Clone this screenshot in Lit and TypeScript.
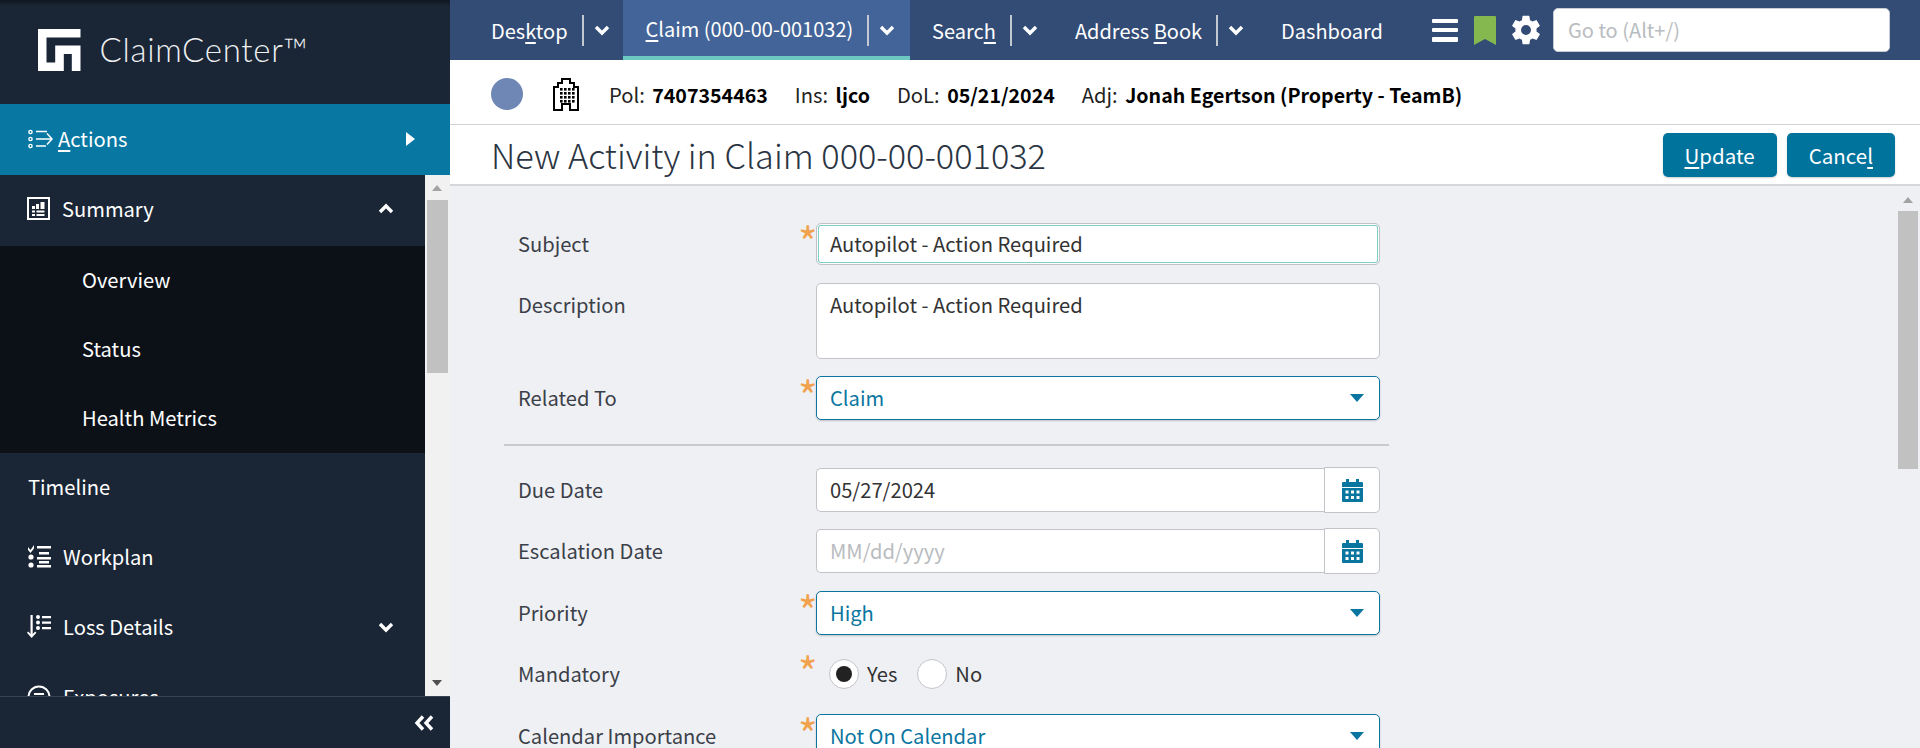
import { LitElement, html, css, svg } from "lit";
import { customElement } from "lit/decorators.js";

const chevronDown = html`<svg class="chev" width="16" height="12" viewBox="0 0 16 12"><path d="M2 3l6 6 6-6" fill="none" stroke="#fff" stroke-width="3.4"/></svg>`;
const chevronUp = html`<svg class="chev" width="16" height="12" viewBox="0 0 16 12"><path d="M2 9l6-6 6 6" fill="none" stroke="#fff" stroke-width="3.4"/></svg>`;

const actionsIcon = html`<svg class="ico" width="25" height="20" viewBox="0 0 25 20" fill="none" stroke="#fff">
  <circle cx="2.5" cy="3" r="1.6" stroke-width="1.4"/><circle cx="2.5" cy="10" r="1.6" stroke-width="1.4"/><circle cx="2.5" cy="17" r="1.6" stroke-width="1.4"/>
  <path d="M8 2.5h11M8 10h16M8 17h10" stroke-width="1.5"/><path d="M19 4.5l5 5.5-5 5.5" stroke-width="1.5"/></svg>`;
const summaryIcon = html`<svg class="ico" width="23" height="23" viewBox="0 0 23 23" fill="none">
  <rect x="1" y="1" width="21" height="21" stroke="#fff" stroke-width="2"/>
  <path fill="#fff" d="M5 9h3v3H5zM9 7h3v5H9zM13.500 5h4v7h-4zM5 13.500h3v2H5zM9.500 13.500h8v2h-8zM5 17h3v2H5zM9.500 17h8v2h-8z"/></svg>`;
const workplanIcon = html`<svg class="ico" width="24" height="23" viewBox="0 0 24 23" fill="#fff">
  <path d="M1 2l2.500 3L7 0v3.500L3.500 8 1 5z"/><circle cx="4" cy="12" r="2.600"/><circle cx="4" cy="20" r="2.600"/>
  <path d="M10 1h14v2.400H10zM12 7h10v2.400H12zM10 12h14v2.400H10zM12 16h10v2.400H12zM10 20h14v2.400H10z"/></svg>`;
const lossIcon = html`<svg class="ico" width="24" height="24" viewBox="0 0 24 24" fill="#fff">
  <path d="M3.500 0h2.200v19l2.500-2.500 1.200 1.300-4.800 5.200L0 17.800l1.200-1.300 2.300 2.500z"/>
  <circle cx="11" cy="2" r="2"/><circle cx="11" cy="7.500" r="2"/><circle cx="11" cy="13" r="2"/>
  <path d="M15 1h9v2.200h-9zM15 6.500h9v2.200h-9zM15 12h9v2.200h-9z"/></svg>`;
const exposureIcon = html`<svg class="ico" width="24" height="24" viewBox="0 0 24 24" fill="none" stroke="#fff" stroke-width="2">
  <circle cx="12" cy="12" r="10.500"/><path d="M7 9h10M7 13h10"/></svg>`;
const buildingIcon = html`<svg width="26" height="33" viewBox="0 0 26 33" fill="none">
  <path d="M1 32V9h4V5h4V1h8v4h4v4h4v23h-8v-6H9v6z" stroke="#000" stroke-width="2"/>
  ${[10, 14, 18, 22].map((y) => [7, 11, 15, 19].map((x) => svg`<rect x=${x} y=${y} width="2.600" height="2.600" fill="#000"/>`))}
</svg>`;
const gearIcon = html`<svg width="34" height="34" viewBox="0 0 24 24"><path fill="#fff" fill-rule="evenodd" d="M19.400 13c.04-.33.06-.66.06-1s-.02-.67-.06-1l2.100-1.650c.2-.15.25-.42.12-.64l-2-3.460c-.12-.22-.39-.3-.61-.22l-2.490 1c-.52-.4-1.080-.73-1.690-.98l-.38-2.650A.49.49 0 0 0 14 2h-4c-.25 0-.46.18-.49.420l-.38 2.650c-.61.25-1.170.59-1.690.98l-2.490-1c-.23-.09-.49 0-.61.220l-2 3.460c-.13.220-.07.490.12.640L4.570 11c-.04.33-.07.67-.07 1s.03.67.07 1l-2.110 1.650c-.19.150-.24.420-.12.640l2 3.460c.12.220.39.300.61.220l2.490-1c.52.400 1.080.730 1.690.980l.38 2.650c.03.240.24.420.49.420h4c.25 0 .46-.18.49-.42l.38-2.650c.61-.25 1.170-.59 1.690-.98l2.490 1c.23.090.49 0 .61-.22l2-3.460c.12-.22.070-.49-.12-.64zM12 15.500a3.500 3.500 0 1 1 0-7 3.500 3.500 0 0 1 0 7z"/></svg>`;
const calendarIcon = html`<svg width="21" height="23" viewBox="0 0 21 23"><path fill="#0a76a0" fill-rule="evenodd" d="M4 0h3v3h7V0h3v3h3a1 1 0 0 1 1 1v4H0V4a1 1 0 0 1 1-1h3zM0 9h21v13a1 1 0 0 1-1 1H1a1 1 0 0 1-1-1zm3.500 2.500v3h3v-3zm5.500 0v3h3v-3zm5.500 0v3h3v-3zm-11 5.500v3h3v-3zm5.500 0v3h3v-3zm5.500 0v3h3v-3z"/></svg>`;
const caret = html`<svg class="caret" width="14" height="8" viewBox="0 0 14 8"><path d="M0 0h14L7 8z" fill="#0a76a0"/></svg>`;

@customElement("app-root")
export class AppRoot extends LitElement {
  static styles = css`
    :host {
      display: block;
      height: 748px;
      overflow: hidden;
      font-family: "Noto Sans CJK SC", "Noto Sans", sans-serif;
      font-size: 20.150px;
      color: #333;
    }
    .page {
      display: flex;
      height: 748px;
    }
    u {
      text-underline-offset: 3px;
      text-decoration-thickness: 2px;
    }

    /* left nav */
    .side {
      width: 450px;
      flex: none;
      display: flex;
      flex-direction: column;
      background: #1a2535;
      color: #fff;
    }
    .brand {
      height: 104px;
      flex: none;
      display: flex;
      align-items: flex-start;
      gap: 19px;
      padding: 29px 0 0 38px;
      box-sizing: border-box;
      background: linear-gradient(#10161f, #1a2535 6px);
    }
    .brand-name {
      font-family: "Lato", sans-serif;
      font-weight: 300;
      font-size: 33px;
      line-height: 40px;
      letter-spacing: 0.7px;
      color: #eef0f2;
    }
    .actions {
      height: 71px;
      flex: none;
      box-sizing: border-box;
      display: flex;
      align-items: center;
      background: #0878a3;
      padding: 0 35px 2px 28px;
      gap: 5px;
    }
    .actions .lbl {
      flex: 1;
    }
    .nav-scroll {
      flex: 1;
      min-height: 0;
      display: flex;
    }
    .nav-list {
      flex: 1;
      min-width: 0;
      overflow: hidden;
    }
    .row {
      height: 70px;
      box-sizing: border-box;
      display: flex;
      align-items: center;
      padding: 0 31px 3px 27px;
      gap: 12px;
    }
    .row.summary {
      height: 71px;
      padding-bottom: 4px;
    }
    .row .lbl {
      flex: 1;
    }
    .row.plain {
      padding-left: 28px;
    }
    .sub {
      background: #0c1118;
    }
    .sub div {
      height: 69px;
      line-height: 67px;
      padding-left: 82px;
    }
    .ico {
      flex: none;
    }
    .track {
      width: 25px;
      flex: none;
      background: #f1f1f1;
      position: relative;
    }
    .track .thumb {
      position: absolute;
      left: 2px;
      right: 2px;
      top: 25px;
      height: 173px;
      background: #c1c1c1;
    }
    .arrow {
      position: absolute;
      left: 7px;
      width: 0;
      height: 0;
      border-left: 5.500px solid transparent;
      border-right: 5.500px solid transparent;
    }
    .arrow.up {
      top: 10px;
      border-bottom: 6px solid #a3a3a3;
    }
    .arrow.down {
      bottom: 10px;
      border-top: 6px solid #505050;
    }
    .collapse {
      height: 52px;
      flex: none;
      box-sizing: border-box;
      border-top: 1px solid #39434f;
      display: flex;
      align-items: center;
      justify-content: flex-end;
      padding-right: 16px;
    }

    /* main column */
    .main {
      flex: 1;
      min-width: 0;
      display: flex;
      flex-direction: column;
    }
    .top {
      height: 60px;
      flex: none;
      display: flex;
      background: #324c76;
      color: #fff;
      font-size: 20px;
    }
    .tab {
      display: flex;
      flex: none;
      align-items: center;
      height: 60px;
      box-sizing: border-box;
      white-space: nowrap;
      padding: 0 14.500px 0 22.500px;
    }
    .tab.first {
      padding: 0 13px 0 41px;
    }
    .tab.active {
      background: #426498;
      border-bottom: 4px solid #6bc9c2;
      width: 287px;
      padding: 0 0 0 23px;
    }
    .tab .sep {
      width: 2px;
      height: 31px;
      background: #c4c8d0;
      margin: 0 10px 0 14px;
    }
    .tab.active .sep {
      margin-top: 4px;
    }
    .tab.active .chev {
      margin-top: 4px;
    }
    .top-tools {
      margin-left: auto;
      display: flex;
      align-items: center;
      padding-right: 30px;
    }
    .burger {
      width: 26px;
      height: 23px;
      display: flex;
      flex-direction: column;
      justify-content: space-between;
      margin-right: 16px;
    }
    .burger i {
      height: 4.500px;
      background: #fff;
      border-radius: 1px;
    }
    .bookmark {
      margin-right: 13px;
      display: block;
    }
    .gear {
      display: flex;
      margin-right: 10px;
    }
    .goto {
      width: 337px;
      height: 44px;
      box-sizing: border-box;
      background: #fff;
      border: 1px solid #c8ccd2;
      border-radius: 5px;
      padding-left: 14px;
      line-height: 42px;
      color: #b9bcc0;
    }

    .info {
      height: 65px;
      flex: none;
      box-sizing: border-box;
      display: flex;
      align-items: center;
      background: #fff;
      border-bottom: 1px solid #d0d2d6;
      color: #222;
      padding: 4px 0 0 41px;
    }
    .dot {
      width: 32px;
      height: 32px;
      border-radius: 50%;
      background: #6e87b5;
      margin-right: 30px;
    }
    .info svg {
      margin-right: 30px;
    }
    .info span {
      margin-right: 27px;
    }
    .info b {
      font-weight: 700;
      font-size: 19.600px;
      color: #000;
      margin-left: 3px;
    }

    .title-bar {
      height: 61px;
      flex: none;
      box-sizing: border-box;
      display: flex;
      align-items: center;
      justify-content: space-between;
      background: #fff;
      border-bottom: 2px solid #d5d6da;
      padding: 0 25px 0 41px;
    }
    h1 {
      margin: 0 0 2px;
      font-size: 34.300px;
      font-weight: 300;
      color: #2a3442;
    }
    .btns {
      display: flex;
      gap: 10px;
    }
    .btn {
      height: 44px;
      line-height: 44px;
      padding: 0 22px;
      border-radius: 5px;
      background: #00739d;
      color: #fff;
      font-size: 20.500px;
      box-shadow: 0 1px 2px rgba(0, 0, 0, 0.2);
    }

    /* form */
    .content {
      flex: 1;
      min-height: 0;
      display: flex;
      background: #eff0f4;
      overflow: hidden;
    }
    .form {
      flex: 1;
      min-width: 0;
      padding: 36px 0 0 55px;
    }
    .vbar {
      width: 22px;
      flex: none;
      position: relative;
    }
    .vbar .thumb {
      position: absolute;
      left: 0;
      right: 2px;
      top: 25px;
      height: 258px;
      background: #c1c1c1;
    }
    .vbar .arrow.up {
      left: 5px;
      top: 11px;
    }
    .group {
      display: grid;
      gap: 17px;
    }
    .group.dates {
      gap: 17.400px;
    }
    .field {
      display: grid;
      grid-template-columns: 282px 16px 564px;
      width: 862px;
      padding-left: 13px;
      min-height: 44px;
      line-height: 44px;
    }
    .label {
      color: #3b4048;
      line-height: 43px;
    }
    .req {
      color: #f0a24e;
      font-size: 42px;
      line-height: 42px;
      height: 30px;
      margin: -2px 0 0 -2px;
    }
    .box {
      box-sizing: border-box;
      height: 44px;
      background: #fff;
      border: 1px solid #c2c4c9;
      border-radius: 5px;
      padding: 0 13px;
      line-height: 42px;
      color: #333;
    }
    .box.focus {
      height: 42px;
      margin-top: 1px;
      border-color: #bfc2c7;
      box-shadow: inset 0 0 0 1px #fff, inset 0 0 0 2px #7dcdc8;
      line-height: 40px;
    }
    .box.area {
      height: 76px;
      line-height: 42px;
    }
    .box.select {
      display: flex;
      align-items: center;
      justify-content: space-between;
      border-color: #0a76a0;
      color: #0a76a0;
      box-shadow: 0 1px 2px rgba(0, 0, 0, 0.2);
      padding-right: 15px;
    }
    .date {
      display: flex;
      height: 44px;
    }
    .date .box {
      flex: 1;
      border-radius: 5px 0 0 5px;
      border-right: none;
    }
    .date .pick {
      width: 56px;
      height: 46px;
      margin-top: -1px;
      box-sizing: border-box;
      background: #fff;
      border: 1px solid #c2c4c9;
      border-radius: 0 5px 5px 0;
      display: flex;
      align-items: center;
      justify-content: center;
    }
    .placeholder {
      color: #b9bcc0;
    }
    .rule {
      height: 2px;
      width: 885px;
      margin: 24px 0 22px -1px;
      background: #c9cacd;
    }
    .radios {
      display: flex;
      align-items: center;
      padding-left: 13px;
      height: 44px;
    }
    .radio {
      width: 30px;
      height: 30px;
      box-sizing: border-box;
      border: 1px solid #c2c4c9;
      border-radius: 50%;
      background: #fff;
      display: flex;
      align-items: center;
      justify-content: center;
      margin-right: 8px;
    }
    .radio i {
      width: 16px;
      height: 16px;
      border-radius: 50%;
      background: #222;
    }
    .radios span {
      margin-right: 20px;
    }
  `;

  private selectField(label: string, value: string) {
    return html`<div class="field">
      <div class="label">${label}</div>
      <div class="req">*</div>
      <div class="box select">${value}${caret}</div>
    </div>`;
  }

  private dateField(label: string, value: string, empty = false) {
    return html`<div class="field">
      <div class="label">${label}</div>
      <div></div>
      <div class="date">
        <div class="box ${empty ? "placeholder" : ""}">${value}</div>
        <div class="pick">${calendarIcon}</div>
      </div>
    </div>`;
  }

  render() {
    return html`<div class="page">
      <aside class="side">
        <div class="brand">
          <svg width="42.500" height="42" viewBox="37.500 29 42.500 42"><path fill="#fff" d="M37.500 29H80v8.500H46v25h8.700V45.500H80V71h-8.700V54h-8v17H37.500z"/></svg>
          <div class="brand-name">ClaimCenter™</div>
        </div>
        <div class="actions">
          ${actionsIcon}
          <span class="lbl"><u>A</u>ctions</span>
          <svg width="9" height="14" viewBox="0 0 9 14"><path d="M0 0l9 7-9 7z" fill="#fff"/></svg>
        </div>
        <div class="nav-scroll">
          <div class="nav-list">
            <div class="row summary">${summaryIcon}<span class="lbl">Summary</span>${chevronUp}</div>
            <div class="sub">
              <div>Overview</div>
              <div>Status</div>
              <div>Health Metrics</div>
            </div>
            <div class="row plain"><span class="lbl">Timeline</span></div>
            <div class="row">${workplanIcon}<span class="lbl">Workplan</span></div>
            <div class="row">${lossIcon}<span class="lbl">Loss Details</span>${chevronDown}</div>
            <div class="row">${exposureIcon}<span class="lbl">Exposures</span></div>
          </div>
          <div class="track">
            <div class="arrow up"></div>
            <div class="thumb"></div>
            <div class="arrow down"></div>
          </div>
        </div>
        <div class="collapse">
          <svg width="20" height="16" viewBox="0 0 20 16"><path d="M9 1.500L3 8l6 6.500M18 1.500L12 8l6 6.500" fill="none" stroke="#fff" stroke-width="3.400"/></svg>
        </div>
      </aside>

      <div class="main">
        <nav class="top">
          <div class="tab first"><span>Des<u>k</u>top</span><i class="sep"></i>${chevronDown}</div>
          <div class="tab active"><span><u>C</u>laim (000-00-001032)</span><i class="sep"></i>${chevronDown}</div>
          <div class="tab"><span>Searc<u>h</u></span><i class="sep"></i>${chevronDown}</div>
          <div class="tab"><span>Address <u>B</u>ook</span><i class="sep"></i>${chevronDown}</div>
          <div class="tab">Dashboard</div>
          <div class="top-tools">
            <div class="burger"><i></i><i></i><i></i></div>
            <svg class="bookmark" width="22" height="29" viewBox="0 0 22 29"><path d="M1 0h20a1 1 0 0 1 1 1v28l-11-6-11 6V1a1 1 0 0 1 1-1z" fill="#85b84e"/></svg>
            <div class="gear">${gearIcon}</div>
            <div class="goto">Go to (Alt+/)</div>
          </div>
        </nav>

        <div class="info">
          <div class="dot"></div>
          ${buildingIcon}
          <span>Pol: <b>7407354463</b></span>
          <span>Ins: <b>ljco</b></span>
          <span>DoL: <b>05/21/2024</b></span>
          <span>Adj: <b>Jonah Egertson (Property - TeamB)</b></span>
        </div>

        <div class="title-bar">
          <h1>New Activity in Claim 000-00-001032</h1>
          <div class="btns">
            <div class="btn"><u>U</u>pdate</div>
            <div class="btn">Cance<u>l</u></div>
          </div>
        </div>

        <div class="content">
          <div class="form">
            <div class="group">
              <div class="field">
                <div class="label">Subject</div>
                <div class="req">*</div>
                <div class="box focus">Autopilot - Action Required</div>
              </div>
              <div class="field">
                <div class="label">Description</div>
                <div></div>
                <div class="box area">Autopilot - Action Required</div>
              </div>
              ${this.selectField("Related To", "Claim")}
            </div>
            <div class="rule"></div>
            <div class="group dates">
              ${this.dateField("Due Date", "05/27/2024")}
              ${this.dateField("Escalation Date", "MM/dd/yyyy", true)}
              ${this.selectField("Priority", "High")}
              <div class="field">
                <div class="label">Mandatory</div>
                <div class="req">*</div>
                <div class="radios">
                  <div class="radio"><i></i></div><span>Yes</span>
                  <div class="radio"></div><span>No</span>
                </div>
              </div>
              ${this.selectField("Calendar Importance", "Not On Calendar")}
            </div>
          </div>
          <div class="vbar">
            <div class="arrow up"></div>
            <div class="thumb"></div>
          </div>
        </div>
      </div>
    </div>`;
  }
}
